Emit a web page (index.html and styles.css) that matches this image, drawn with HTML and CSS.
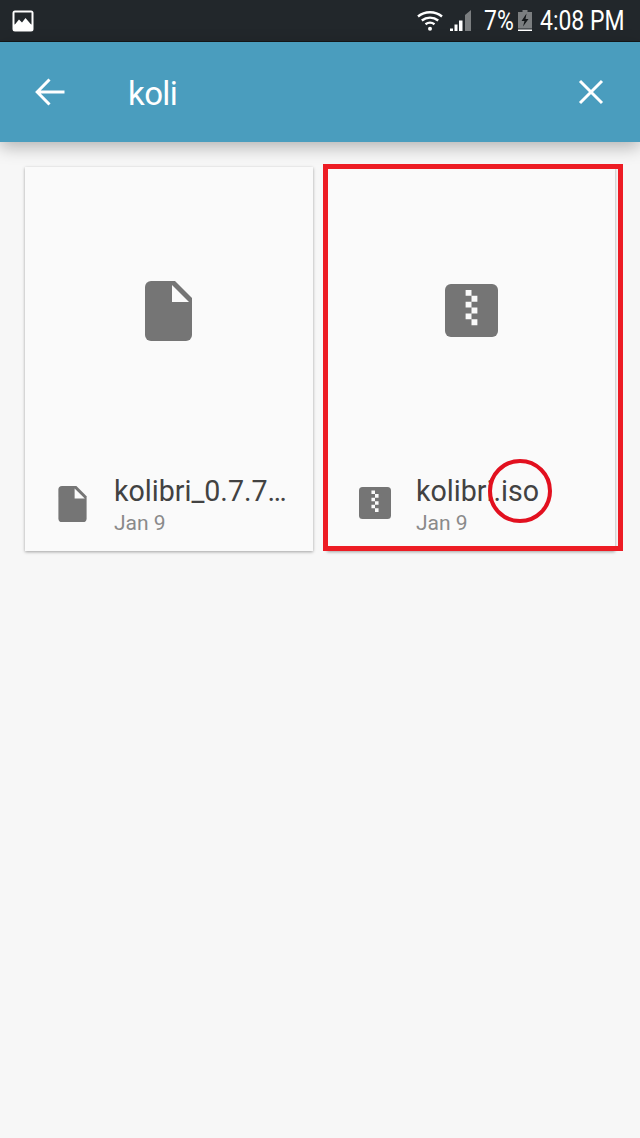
FILE: index.html
```html
<!DOCTYPE html>
<html lang="en">
<head>
<meta charset="utf-8">
<title>Search</title>
<link rel="stylesheet" href="styles.css">
</head>
<body>
<div class="status">
  <svg class="st-pic" viewBox="0 0 22 22"><rect x="0.5" y="0.5" width="21" height="21" rx="2.5" fill="#fff"/><rect x="2.5" y="2.5" width="17" height="12" fill="#22272b"/><path d="M2.500 15 7 9.500l3 3 3.500-4.500 6 7V17h-17z" fill="#fff"/></svg>
  <div class="st-right">
    <svg class="st-wifi" viewBox="0 0 26 21"><g fill="none" stroke="#fff" stroke-width="2.4"><path d="M1 6.500C7.800 .8 18.200 .8 25 6.500"/><path d="M4.800 10.500c4.800-3.800 11.600-3.800 16.400 0"/><path d="M8.500 14.300c2.700-2 6.300-2 9 0"/></g><circle cx="13" cy="18.800" r="2" fill="#fff"/></svg>
    <svg class="st-signal" viewBox="0 0 21 21"><path d="M21 0v21h-6V5z" fill="#7b7e80"/><path d="M0 21v-2.500h3V21zM4.500 21v-6.500h3V21zM9 21V10.500h3.500V21z" fill="#fff"/></svg>
    <span class="st-text st-pct">7%</span>
    <svg class="st-batt" viewBox="0 0 14 21"><path d="M4.500 0h5v2H14v16.500H0V2h4.500z" fill="#7b7e80"/><path d="M8.500 3.500 3.500 11h3L5 16.500 10.500 9h-3z" fill="#15181a"/><rect y="19.500" width="14" height="1.500" fill="#fff"/></svg>
    <span class="st-text st-time">4:08 PM</span>
  </div>
</div>
<header class="bar">
  <svg class="bar-icon back" viewBox="0 0 30 28"><path d="M14.500 1.500 2.200 14l12.300 12.500M2.200 14H29.500" fill="none" stroke="#fff" stroke-width="3"/></svg>
  <span class="query">koli</span>
  <svg class="bar-icon close" viewBox="0 0 26 26"><path d="M2 2l22 22M24 2 2 24" fill="none" stroke="#fff" stroke-width="3"/></svg>
</header>
<main class="grid">
  <article class="card">
    <div class="thumb">
      <svg class="big-file" viewBox="0 0 47 60"><path d="M6 0h24l17 17v37a6 6 0 0 1-6 6H6a6 6 0 0 1-6-6V6a6 6 0 0 1 6-6z" fill="#757575"/><path d="M27 4l17 17H27z" fill="#fafafa"/></svg>
    </div>
    <div class="info">
      <svg class="small-file" viewBox="0 0 47 60"><path d="M6 0h24l17 17v37a6 6 0 0 1-6 6H6a6 6 0 0 1-6-6V6a6 6 0 0 1 6-6z" fill="#757575"/><path d="M27 4l17 17H27z" fill="#fafafa"/></svg>
      <div class="meta">
        <div class="name">kolibri_0.7.7…</div>
        <div class="date">Jan 9</div>
      </div>
    </div>
  </article>
  <article class="card">
    <div class="thumb">
      <svg class="big-zip" viewBox="0 0 54 54"><rect width="54" height="54" rx="6" fill="#757575"/><path d="M21 6h6v6h-6zM27 12h6v6h-6zM21 18h6v6h-6zM27 24h6v6h-6zM21 30h6v6h-6zM27 36h6v6h-6z" fill="#fafafa"/></svg>
    </div>
    <div class="info">
      <svg class="small-zip" viewBox="0 0 54 54"><rect width="54" height="54" rx="6" fill="#757575"/><path d="M21 6h6v6h-6zM27 12h6v6h-6zM21 18h6v6h-6zM27 24h6v6h-6zM21 30h6v6h-6zM27 36h6v6h-6z" fill="#fafafa"/></svg>
      <div class="meta">
        <div class="name">kolibri.iso</div>
        <div class="date">Jan 9</div>
      </div>
    </div>
    <div class="mark-box"></div>
    <div class="mark-circle"></div>
  </article>
</main>
</body>
</html>
```
FILE: styles.css
```css
* { box-sizing: border-box; }
html, body { margin: 0; height: 100%; }
body {
  width: 640px;
  height: 1138px;
  overflow: hidden;
  background: #f7f7f7;
  font-family: Roboto, "Noto Sans", sans-serif;
}
.status {
  height: 42px;
  background: #22272b;
  border-bottom: 1px solid #15181a;
  display: flex;
  align-items: center;
  justify-content: space-between;
  padding: 0 15px 0 12px;
}
.st-pic { width: 22px; height: 22px; display: block; }
.st-right { display: flex; align-items: center; }
.st-wifi { width: 26px; height: 21px; margin-right: 7px; }
.st-signal { width: 21px; height: 21px; margin-right: 13px; }
.st-batt { width: 14px; height: 21px; margin: 0 8px 0 6px; }
.st-text {
  display: block;
  color: #fff;
  font-size: 27px;
  line-height: 30px;
  margin-top: 1px;
  white-space: nowrap;
  transform: scaleX(0.85);
  transform-origin: left center;
}
.st-pct { width: 28px; }
.st-time { width: 85px; }
.bar {
  height: 100px;
  background: #4a9dbe;
  display: flex;
  align-items: center;
  padding: 0 35px;
  box-shadow: 0 5px 16px rgba(0, 0, 0, 0.28);
  position: relative;
}
.bar-icon { display: block; }
.back { width: 30px; height: 28px; margin-right: 63px; }
.close { width: 26px; height: 26px; margin-left: auto; margin-right: 1px; }
.query {
  color: #fff;
  font-size: 33px;
  line-height: 40px;
  letter-spacing: -0.6px;
  margin-top: 4px;
}
.grid {
  display: grid;
  grid-template-columns: 288px 288px;
  gap: 14px;
  padding: 25px 0 0 25px;
}
.card {
  height: 384px;
  background: #fafafa;
  box-shadow: 0 1px 3px rgba(0, 0, 0, 0.35);
  display: flex;
  flex-direction: column;
  position: relative;
}
.thumb {
  height: 288px;
  display: flex;
  align-items: center;
  justify-content: center;
}
.big-file { width: 47px; height: 60px; margin-right: 1px; }
.big-zip { width: 53px; height: 53px; margin-top: -1px; }
.info {
  flex: 1;
  display: flex;
  align-items: flex-start;
  padding: 19px 0 0 33px;
}
.small-file { width: 29px; height: 36px; margin-top: 12px; margin-right: 27px; }
.small-zip { width: 32px; height: 32px; margin-top: 13px; margin-left: -1px; margin-right: 25px; }
.meta { min-width: 0; }
.name {
  color: #424242;
  font-size: 28.6px;
  line-height: 34px;
  white-space: nowrap;
}
.date {
  color: #8a8a8a;
  font-size: 21px;
  line-height: 26px;
  margin-top: 2px;
}
.mark-box {
  position: absolute;
  left: -4px;
  top: -3px;
  width: 300px;
  height: 387px;
  border: 5px solid #ed1c24;
}
.mark-circle {
  position: absolute;
  left: 161px;
  top: 292px;
  width: 64px;
  height: 64px;
  border: 4px solid #e2101f;
  border-radius: 50%;
}
```
